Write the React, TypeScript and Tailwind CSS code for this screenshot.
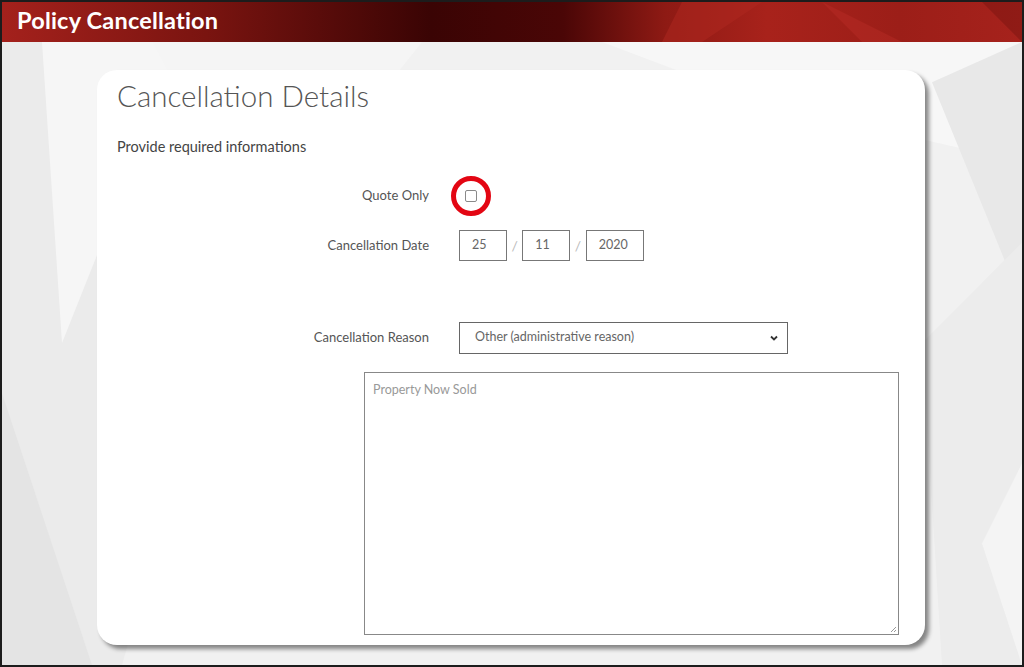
import React from "react";

const font = { fontFamily: "Lato, 'Noto Sans', sans-serif" };

// faint faceted backdrop behind the card
const Backdrop = () => (
  <svg className="absolute inset-0 h-full w-full" viewBox="0 0 1020 621" preserveAspectRatio="none">
    <rect width="1020" height="621" fill="#f1f1f1" />
    <polygon points="0,0 300,0 120,621 0,621" fill="#ebebeb" />
    <polygon points="40,0 180,0 60,300" fill="#f6f6f6" />
    <polygon points="150,0 420,0 260,200" fill="#f5f5f5" />
    <polygon points="600,0 1020,0 1020,120 760,60" fill="#f7f7f7" />
    <polygon points="930,40 1020,0 1020,260" fill="#e8e8e8" />
    <polygon points="920,300 1020,200 1020,621 940,621" fill="#ececec" />
    <polygon points="0,350 90,621 0,621" fill="#e4e4e4" />
    <polygon points="980,500 1020,420 1020,621" fill="#f4f4f4" />
  </svg>
);

const Header = () => (
  <div
    className="relative flex h-[40px] shrink-0 items-center overflow-hidden px-[15px]"
    style={{
      background:
        "linear-gradient(90deg, #a4211c 0%, #7a1410 20%, #3a0404 42%, #4a0606 55%, #8e1a14 65%, #a8221b 75%, #9c1e18 88%, #a6221c 100%)",
    }}
  >
    <svg className="absolute inset-0 h-full w-full" viewBox="0 0 1020 40" preserveAspectRatio="none">
      <polygon points="680,0 760,0 700,40 660,40" fill="#b02820" opacity="0.5" />
      <polygon points="820,0 900,40 860,40" fill="#c0302a" opacity="0.35" />
      <polygon points="980,0 1020,0 1020,40" fill="#7a1410" opacity="0.5" />
    </svg>
    <h1 className="relative -mt-[3px] text-[23.5px] font-bold tracking-[0.2px] text-white" style={font}>
      Policy Cancellation
    </h1>
  </div>
);

const Label = ({ children }: { children: React.ReactNode }) => (
  <div className="w-[333px] shrink-0 pr-[1px] text-right text-[13px] text-[#555]">{children}</div>
);

const Box = ({ value, w }: { value: string; w: string }) => (
  <div className={`flex h-[31px] ${w} items-center border border-[#777] bg-white pl-[12px] text-[12.5px] text-[#666]`}>
    {value}
  </div>
);

const Slash = () => <span className="mx-[4.5px] text-[14px] text-[#bbb]">/</span>;

export default function App() {
  return (
    <div className="flex h-[667px] w-[1024px] flex-col overflow-hidden border-2 border-[#1c1c1c] bg-white" style={font}>
      <Header />
      <div className="relative flex-1">
        <Backdrop />
        <div className="relative ml-[95px] mt-[28px] h-[575px] w-[828px] rounded-[20px] bg-white shadow-[4px_4px_4px_rgba(0,0,0,0.45)]">
          <h2 className="pl-[20px] pt-[10px] text-[29.5px] font-light leading-[32px] text-[#555]">Cancellation Details</h2>
          <p className="mt-[24px] pl-[20px] text-[14.5px] text-[#444]">Provide required informations</p>

          <div className="mt-[18px] flex items-center">
            <Label>Quote Only</Label>
            <div className="ml-[21px] flex h-[40px] w-[40px] items-center justify-center rounded-full border-[5px] border-[#e30613]">
              <div className="h-[12px] w-[12px] rounded-[2px] border border-[#8a8a8a] bg-white" />
            </div>
          </div>

          <div className="mt-[14px] flex items-start">
            <div className="pt-[6px]">
              <Label>Cancellation Date</Label>
            </div>
            <div className="ml-[29px] flex items-center">
              <Box value="25" w="w-[48px]" />
              <Slash />
              <Box value="11" w="w-[48px]" />
              <Slash />
              <Box value="2020" w="w-[58px]" />
            </div>
          </div>

          <div className="mt-[61px] flex items-center">
            <Label>Cancellation Reason</Label>
            <div className="ml-[29px] flex h-[32px] w-[329px] items-center justify-between border border-[#666] bg-white pl-[15px] pr-[8px] text-[12.5px] text-[#666]">
              <span>Other (administrative reason)</span>
              <svg width="10" height="10" viewBox="0 0 10 10">
                <path d="M2 3.5 L5 6.5 L8 3.5" fill="none" stroke="#333" strokeWidth="1.8" />
              </svg>
            </div>
          </div>

          <div className="relative ml-[267px] mt-[18px] h-[263px] w-[535px] border border-[#888] bg-white px-[8px] py-[8px] text-[12.5px] text-[#999]">
            Property Now Sold
            <svg className="absolute bottom-[1px] right-[1px]" width="8" height="8" viewBox="0 0 8 8">
              <path d="M7 2 L2 7 M7 5 L5 7" stroke="#999" strokeWidth="1" />
            </svg>
          </div>
        </div>
      </div>
    </div>
  );
}
